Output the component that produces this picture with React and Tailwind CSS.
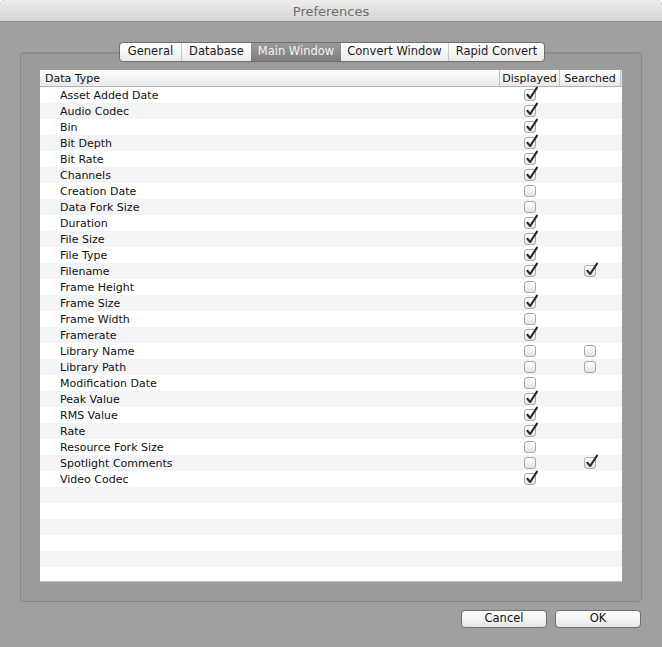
const font = { fontFamily: '"DejaVu Sans", "Liberation Sans", sans-serif' }

const rows = [
  ['Asset Added Date', true, null],
  ['Audio Codec', true, null],
  ['Bin', true, null],
  ['Bit Depth', true, null],
  ['Bit Rate', true, null],
  ['Channels', true, null],
  ['Creation Date', false, null],
  ['Data Fork Size', false, null],
  ['Duration', true, null],
  ['File Size', true, null],
  ['File Type', true, null],
  ['Filename', true, true],
  ['Frame Height', false, null],
  ['Frame Size', true, null],
  ['Frame Width', false, null],
  ['Framerate', true, null],
  ['Library Name', false, false],
  ['Library Path', false, false],
  ['Modification Date', false, null],
  ['Peak Value', true, null],
  ['RMS Value', true, null],
  ['Rate', true, null],
  ['Resource Fork Size', false, null],
  ['Spotlight Comments', false, true],
  ['Video Codec', true, null],
]

const tabs = ['General', 'Database', 'Main Window', 'Convert Window', 'Rapid Convert']
const tabWidths = ['w-[61px]', 'w-[70px]', 'w-[90px]', 'w-[107px]', 'w-[96px]']

function Checkbox({ checked }) {
  return (
    <div className="relative w-[12px] h-[12px] rounded-[3px] border border-[#a8a8a8] bg-gradient-to-b from-white to-[#e4e4e4]">
      {checked && (
        <svg className="absolute left-[0px] top-[-4px]" width="14" height="15" viewBox="0 0 14 15">
          <path d="M2.4 8.8 L5.2 12 L12 1.6" fill="none" stroke="#2b2b2b" strokeWidth="2.1" strokeLinecap="round" strokeLinejoin="round" />
        </svg>
      )}
    </div>
  )
}

export default function App() {
  const empty = 6
  return (
    <div className="w-[662px] h-[647px] bg-[#a0a0a0] flex flex-col rounded-t-[5px] overflow-hidden" style={font}>
      {/* Title bar */}
      <div className="h-[22px] shrink-0 bg-gradient-to-b from-[#ededed] to-[#d3d3d3] border-b border-[#8c8c8c] flex items-center justify-center rounded-t-[5px]">
        <span className="text-[13px] text-[#6e6e6e] leading-none pt-[1px]">Preferences</span>
      </div>

      {/* Group box */}
      <div className="mx-[20px] mt-[30px] h-[550px] shrink-0 bg-[#9b9b9b] border border-[#8a8a8a] rounded-[4px] flex flex-col shadow-[inset_0_1px_1px_rgba(0,0,0,0.08)]">
        <div className="flex justify-center -mt-[11px] ml-[2px]">
          <div className="flex h-[20px] rounded-[4px] border border-[#6f6f6f] overflow-hidden bg-gradient-to-b from-white to-[#ececec]">
            {tabs.map((t, i) => {
              const sel = t === 'Main Window'
              const divider = i > 0 && !sel && tabs[i - 1] !== 'Main Window'
              return (
                <div
                  key={t}
                  className={`${tabWidths[i]} flex items-center justify-center text-[11.5px] leading-none ${sel ? 'bg-gradient-to-b from-[#9a9a9a] to-[#7d7d7d] text-[#f4f4f4]' : 'text-[#1a1a1a]'} ${divider ? 'border-l border-[#c9c9c9]' : ''}`}
                >
                  {t}
                </div>
              )
            })}
          </div>
        </div>

        {/* Table */}
        <div className="mx-[19px] mt-[8px] h-[512px] bg-white border-b border-[#c0c0c0] flex flex-col overflow-hidden">
          <div className="h-[17px] flex bg-gradient-to-b from-white to-[#e9e9e9] border-b border-[#b4b4b4] text-[11px] text-[#111] leading-none shrink-0">
            <div className="w-[459px] flex items-center pl-[5px]">Data Type</div>
            <div className="w-[60px] flex items-center justify-center border-l border-[#c4c4c4]">Displayed</div>
            <div className="w-[61px] flex items-center justify-center border-l border-[#c4c4c4]">Searched</div>
            <div className="flex-1 border-l border-[#c4c4c4] bg-[#e6e6e6]" />
          </div>
          {rows.map(([name, disp, srch], i) => (
            <div key={name} className={`h-[16px] flex shrink-0 text-[11px] text-[#111] leading-none ${i % 2 ? 'bg-[#f3f4f6]' : 'bg-white'}`}>
              <div className="w-[459px] flex items-center pl-[20px]">{name}</div>
              <div className="w-[60px] flex items-center justify-center pl-[1px]">
                <Checkbox checked={disp} />
              </div>
              <div className="w-[61px] flex items-center justify-center">
                {srch !== null && <Checkbox checked={srch} />}
              </div>
            </div>
          ))}
          {Array.from({ length: empty }).map((_, i) => (
            <div key={i} className={`h-[16px] shrink-0 ${(rows.length + i) % 2 ? 'bg-[#f3f4f6]' : 'bg-white'}`} />
          ))}
        </div>
      </div>

      {/* Buttons */}
      <div className="flex justify-end gap-[8px] pr-[21px] mt-[8px]">
        {['Cancel', 'OK'].map(b => (
          <button
            key={b}
            className="w-[86px] h-[18px] rounded-[4px] border border-[#707070] bg-gradient-to-b from-white to-[#e6e6e6] text-[11.5px] text-[#111] leading-none flex items-center justify-center"
          >
            {b}
          </button>
        ))}
      </div>
    </div>
  )
}
